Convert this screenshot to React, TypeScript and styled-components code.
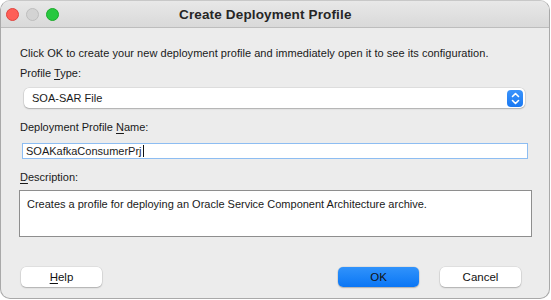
import styled, { createGlobalStyle } from 'styled-components';

const GlobalStyle = createGlobalStyle`
  html, body {
    margin: 0;
    padding: 0;
    background: #ffffff;
  }
  body {
    font-family: "Liberation Sans", Arial, sans-serif;
    color: #1a1a1a;
  }
`;

export default function App() {
  return (
    <>
      <GlobalStyle />
      <Screen>
        <Window>
          <TitleBar>
            <Lights>
              <Light $color="#fe5f57" $edge="#e0443e" />
              <Light $color="#d3d3d3" $edge="#bdbdbd" />
              <Light $color="#28c840" $edge="#1aab29" />
            </Lights>
            <Title>Create Deployment Profile</Title>
          </TitleBar>
          <Body>
            <Intro>
              Click OK to create your new deployment profile and immediately open it to see its configuration.
            </Intro>
            <Label $gap={8}>
              Profile <u>T</u>ype:
            </Label>
            <Select>
              <span>SOA-SAR File</span>
              <Stepper>
                <svg width="9" height="13" viewBox="0 0 9 13" fill="none">
                  <path d="M1.5 4.5 L4.5 1.5 L7.5 4.5" stroke="#fff" strokeWidth="1.6" strokeLinecap="round" strokeLinejoin="round" />
                  <path d="M1.5 8.5 L4.5 11.5 L7.5 8.5" stroke="#fff" strokeWidth="1.6" strokeLinecap="round" strokeLinejoin="round" />
                </svg>
              </Stepper>
            </Select>
            <Label $gap={9} $top={12}>
              Deployment Profile <u>N</u>ame:
            </Label>
            <NameField>
              SOAKafkaConsumerPrj
              <Caret />
            </NameField>
            <Label $gap={6} $top={11}>
              <u>D</u>escription:
            </Label>
            <DescBox>Creates a profile for deploying an Oracle Service Component Architecture archive.</DescBox>
            <ButtonRow>
              <Button>
                <u>H</u>elp
              </Button>
              <Spacer />
              <Button $primary>OK</Button>
              <Button>Cancel</Button>
            </ButtonRow>
          </Body>
        </Window>
      </Screen>
    </>
  );
}

const Screen = styled.div`
  width: 551px;
  height: 300px;
  overflow: hidden;
  background: #ffffff;
`;

const Window = styled.div`
  box-sizing: border-box;
  width: 550px;
  height: 299px;
  display: flex;
  flex-direction: column;
  background: #ececec;
  border: 1px solid #a9a9a9;
  border-top-color: #c8c8c8;
  border-radius: 10px;
  overflow: hidden;
`;

const TitleBar = styled.div`
  height: 26px;
  display: flex;
  align-items: center;
  padding-left: 5px;
  background: linear-gradient(#e8e8e8, #d9d9d9);
  border-bottom: 1px solid #bdbdbd;
`;

const Lights = styled.div`
  display: flex;
  gap: 7px;
`;

const Light = styled.span<{ $color: string; $edge: string }>`
  width: 11px;
  height: 11px;
  border-radius: 50%;
  background: ${p => p.$color};
  border: 0.5px solid ${p => p.$edge};
`;

const Title = styled.div`
  margin-left: 120px;
  font-size: 13.5px;
  font-weight: bold;
  color: #262626;
  letter-spacing: 0.15px;
`;

const Body = styled.div`
  flex: 1;
  display: flex;
  flex-direction: column;
  padding: 18px 17px 11px 19px;
  font-size: 11px;
  line-height: 14px;
`;

const Intro = styled.div`
  margin-bottom: 6px;
  white-space: nowrap;
  letter-spacing: 0.04px;
`;

const Label = styled.div<{ $gap: number; $top?: number }>`
  margin-top: ${p => p.$top ?? 0}px;
  margin-bottom: ${p => p.$gap}px;
  u {
    text-underline-offset: 2px;
  }
`;

const Select = styled.div`
  box-sizing: border-box;
  margin-left: 4px;
  width: 501px;
  height: 20px;
  display: flex;
  align-items: center;
  justify-content: space-between;
  padding: 0 2px 0 8px;
  background: #ffffff;
  border-radius: 5px;
  box-shadow: 0 0 0 0.5px rgba(0, 0, 0, 0.12), 0 1px 1.5px rgba(0, 0, 0, 0.22);
`;

const Stepper = styled.div`
  width: 16px;
  height: 17px;
  border-radius: 4px;
  background: linear-gradient(#3a93fb, #1a79f2);
  display: flex;
  align-items: center;
  justify-content: center;
`;

const NameField = styled.div`
  box-sizing: border-box;
  margin-left: 2px;
  width: 506px;
  height: 16px;
  display: flex;
  align-items: center;
  padding-left: 3px;
  background: #ffffff;
  border: 1px solid #8dbdf2;
`;

const Caret = styled.span`
  width: 1px;
  height: 12px;
  margin-left: 1px;
  background: #111;
`;

const DescBox = styled.div`
  box-sizing: border-box;
  margin-left: -1px;
  width: 513px;
  height: 47px;
  padding: 6px 7px;
  background: #ffffff;
  border: 1px solid #8e8e8e;
`;

const ButtonRow = styled.div`
  margin-top: auto;
  display: flex;
  gap: 21px;
  padding-left: 1px;
  padding-right: 11px;
`;

const Spacer = styled.div`
  flex: 1;
`;

const Button = styled.div<{ $primary?: boolean }>`
  width: 81px;
  height: 20px;
  display: flex;
  align-items: center;
  justify-content: center;
  border-radius: 5px;
  font-size: 11.5px;
  color: #111;
  background: ${p => (p.$primary ? 'linear-gradient(#3193fb, #0a76f5)' : '#ffffff')};
  box-shadow: 0 0 0 0.5px rgba(0, 0, 0, 0.1), 0 1px 1.5px rgba(0, 0, 0, 0.22);
  u {
    text-underline-offset: 2px;
  }
`;
